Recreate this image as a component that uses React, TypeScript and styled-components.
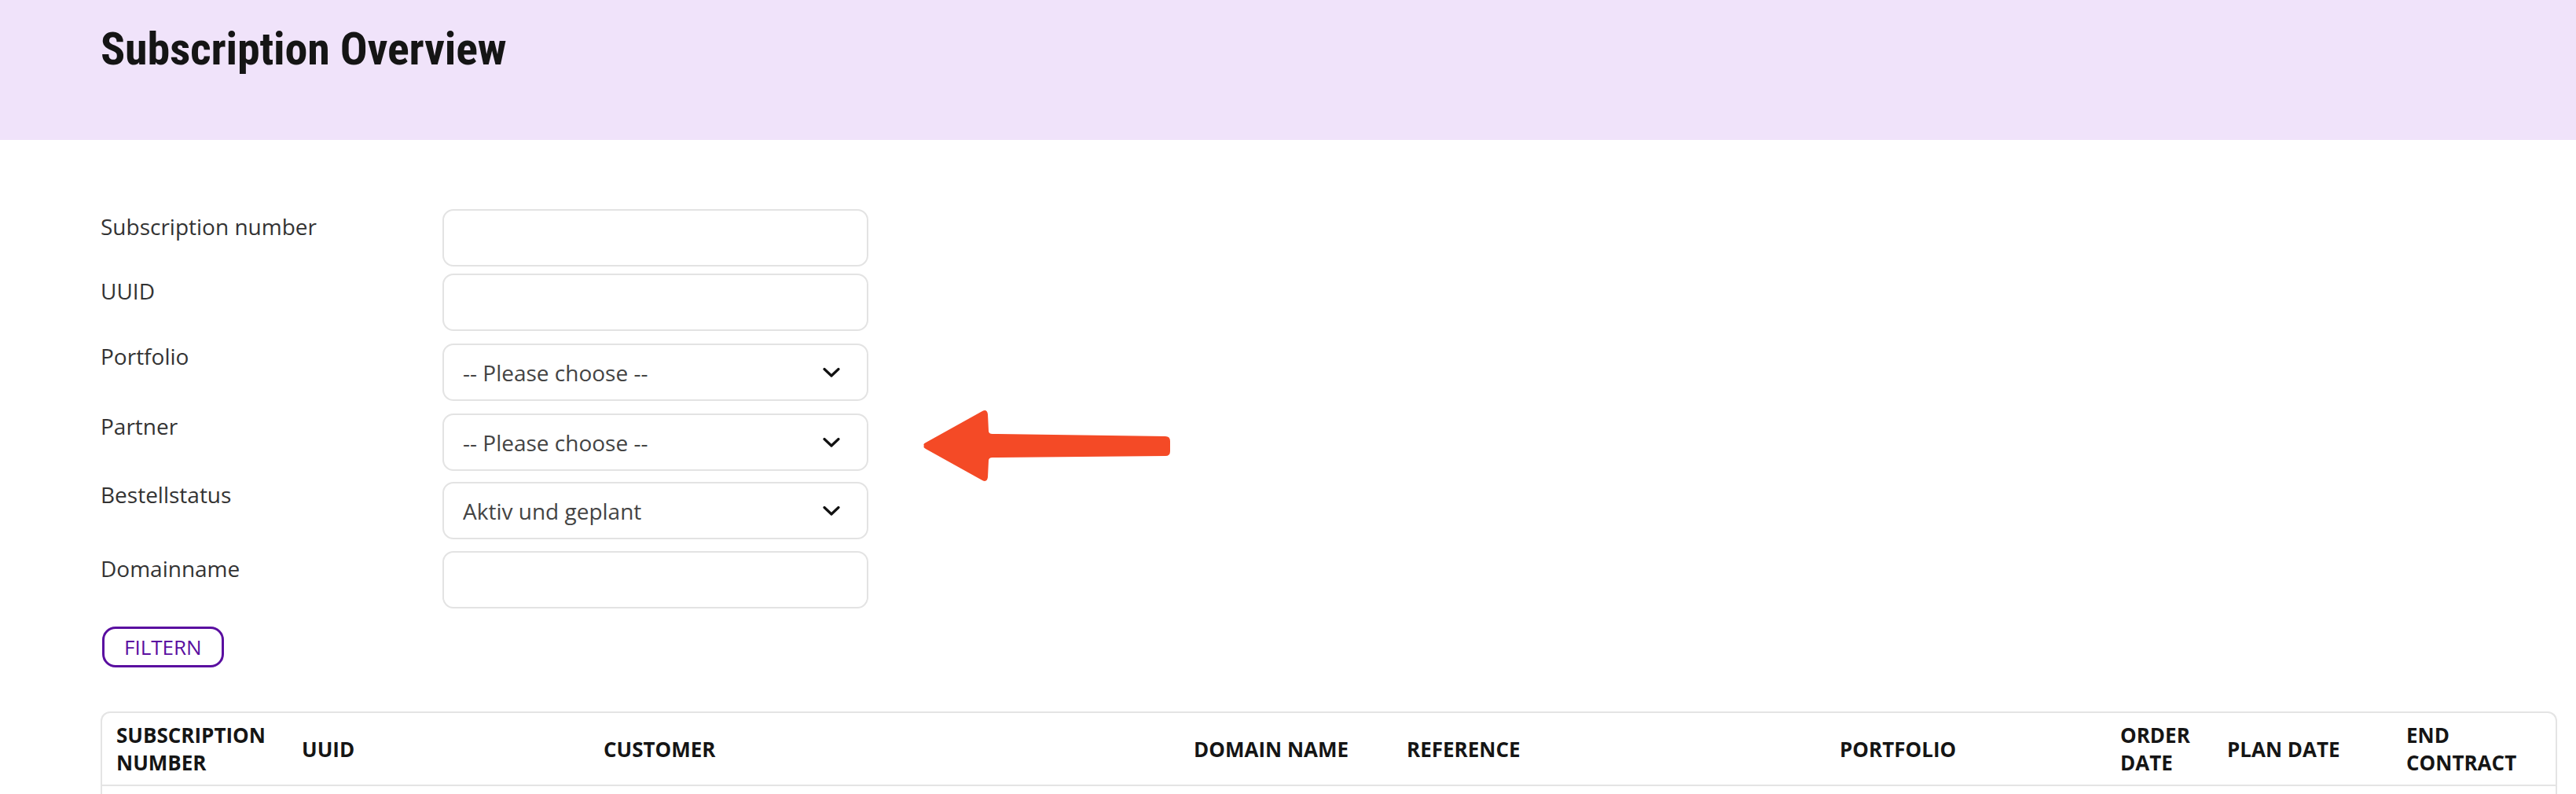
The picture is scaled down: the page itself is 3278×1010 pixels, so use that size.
import React from "react";
import styled, { createGlobalStyle } from "styled-components";

const GlobalStyle = createGlobalStyle`
  body {
    margin: 0;
    background: #ffffff;
    font-family: "Open Sans", "Liberation Sans", sans-serif;
    color: #333333;
  }
`;

const Page = styled.div`
  width: 3278px;
  min-height: 1010px;
`;

const HeaderBand = styled.header`
  height: 178px;
  box-sizing: border-box;
  padding: 22px 0 0 128px;
  background-color: #f0e3fa;
`;

const Title = styled.h1`
  margin: 0;
  font-family: "Roboto Condensed", Roboto, sans-serif;
  font-stretch: condensed;
  font-size: 58px;
  font-weight: 700;
  line-height: 80px;
  letter-spacing: -0.2px;
  color: #151515;
`;

const Main = styled.main`
  position: relative;
  padding: 88px 24px 0 128px;
`;

const FilterForm = styled.form`
  display: flex;
  flex-direction: column;
  align-items: flex-start;
`;

const FormRow = styled.div<{ $space: number }>`
  display: grid;
  grid-template-columns: 435px 542px;
  align-items: start;
  margin-bottom: ${(p) => p.$space}px;
`;

const Label = styled.label`
  font-size: 28px;
  line-height: 44px;
  color: #333333;
`;

const TextInput = styled.input`
  box-sizing: border-box;
  width: 542px;
  height: 73px;
  border: 2px solid #e3e3e3;
  border-radius: 14px;
  background: #ffffff;
  padding: 0 24px;
  font-family: inherit;
  font-size: 28px;
  outline: none;
`;

const SelectWrap = styled.div`
  position: relative;
  width: 542px;
  margin-top: 6px;
`;

const Select = styled.select`
  box-sizing: border-box;
  width: 100%;
  height: 73px;
  border: 2px solid #e3e3e3;
  border-radius: 14px;
  background: #ffffff;
  padding: 0 60px 0 24px;
  font-family: "Open Sans", "Liberation Sans", sans-serif;
  font-size: 28px;
  color: #444444;
  appearance: none;
  -webkit-appearance: none;
  outline: none;
`;

const Chevron = styled.svg`
  position: absolute;
  top: 50%;
  right: 36px;
  transform: translateY(-50%);
  pointer-events: none;
`;

const FilterButton = styled.button`
  box-sizing: border-box;
  margin-left: 2px;
  height: 52px;
  padding: 0 25px;
  border: 3px solid #5a0ea0;
  border-radius: 17px;
  background: #ffffff;
  color: #5a0ea0;
  font-family: "Open Sans", "Liberation Sans", sans-serif;
  font-size: 26px;
  line-height: 1;
  text-transform: uppercase;
  cursor: pointer;
`;

const Arrow = styled.svg`
  position: absolute;
  left: 1170px;
  top: 337px;
`;

const TableFrame = styled.div`
  margin-top: 56px;
  border: 2px solid #e4e4e4;
  border-bottom: none;
  border-radius: 12px 12px 0 0;
  overflow: hidden;
`;

const Table = styled.table`
  width: 100%;
  table-layout: fixed;
  border-collapse: collapse;
`;

const Th = styled.th`
  padding: 11px 18px 10px;
  border-bottom: 2px solid #e4e4e4;
  text-align: left;
  vertical-align: middle;
  font-size: 26px;
  font-weight: 700;
  line-height: 35px;
  text-transform: uppercase;
  color: #151515;
`;

const Td = styled.td`
  height: 80px;
  padding: 10px 18px;
`;

type Field = {
  label: string;
  kind: "text" | "select";
  value?: string;
  space: number;
};

const fields: Field[] = [
  { label: "Subscription number", kind: "text", space: 9 },
  { label: "UUID", kind: "text", space: 10 },
  { label: "Portfolio", kind: "select", value: "-- Please choose --", space: 10 },
  { label: "Partner", kind: "select", value: "-- Please choose --", space: 8 },
  { label: "Bestellstatus", kind: "select", value: "Aktiv und geplant", space: 15 },
  { label: "Domainname", kind: "text", space: 23 },
];

const columns = [
  { title: "Subscription number", width: 236 },
  { title: "UUID", width: 384 },
  { title: "Customer", width: 751 },
  { title: "Domain name", width: 271 },
  { title: "Reference", width: 551 },
  { title: "Portfolio", width: 357 },
  { title: "Order date", width: 136 },
  { title: "Plan date", width: 228 },
  { title: "End contract", width: 212 },
];

function ChevronIcon() {
  return (
    <Chevron width="22" height="14" viewBox="0 0 22 14" fill="none">
      <path d="M2 2.5L11 11L20 2.5" stroke="#111111" strokeWidth="3.2" strokeLinecap="round" strokeLinejoin="round" />
    </Chevron>
  );
}

function PointerArrow() {
  return (
    <Arrow width="325" height="105" viewBox="0 0 325 105">
      <path
        d="M6 52 Q4 50 8 48 L80 8 Q86 5 87 12 L88 33 Q88 37 93 37 L313 40 Q319 40 319 46 L319 59 Q319 65 313 65 L93 67 Q88 67 88 71 L87 92 Q86 99 80 96 L8 56 Q4 54 6 52 Z"
        fill="#f44a26"
      />
    </Arrow>
  );
}

export default function App() {
  return (
    <Page>
      <GlobalStyle />
      <HeaderBand>
        <Title>Subscription Overview</Title>
      </HeaderBand>
      <Main>
        <FilterForm onSubmit={(e) => e.preventDefault()}>
          {fields.map((f) => (
            <FormRow key={f.label} $space={f.space}>
              <Label>{f.label}</Label>
              {f.kind === "text" ? (
                <TextInput type="text" />
              ) : (
                <SelectWrap>
                  <Select defaultValue={f.value}>
                    <option>{f.value}</option>
                  </Select>
                  <ChevronIcon />
                </SelectWrap>
              )}
            </FormRow>
          ))}
          <FilterButton type="submit">Filtern</FilterButton>
        </FilterForm>
        <PointerArrow />
        <TableFrame>
          <Table>
            <colgroup>
              {columns.map((c) => (
                <col key={c.title} style={{ width: c.width }} />
              ))}
            </colgroup>
            <thead>
              <tr>
                {columns.map((c) => (
                  <Th key={c.title}>{c.title}</Th>
                ))}
              </tr>
            </thead>
            <tbody>
              <tr>
                {columns.map((c) => (
                  <Td key={c.title} />
                ))}
              </tr>
            </tbody>
          </Table>
        </TableFrame>
      </Main>
    </Page>
  );
}
